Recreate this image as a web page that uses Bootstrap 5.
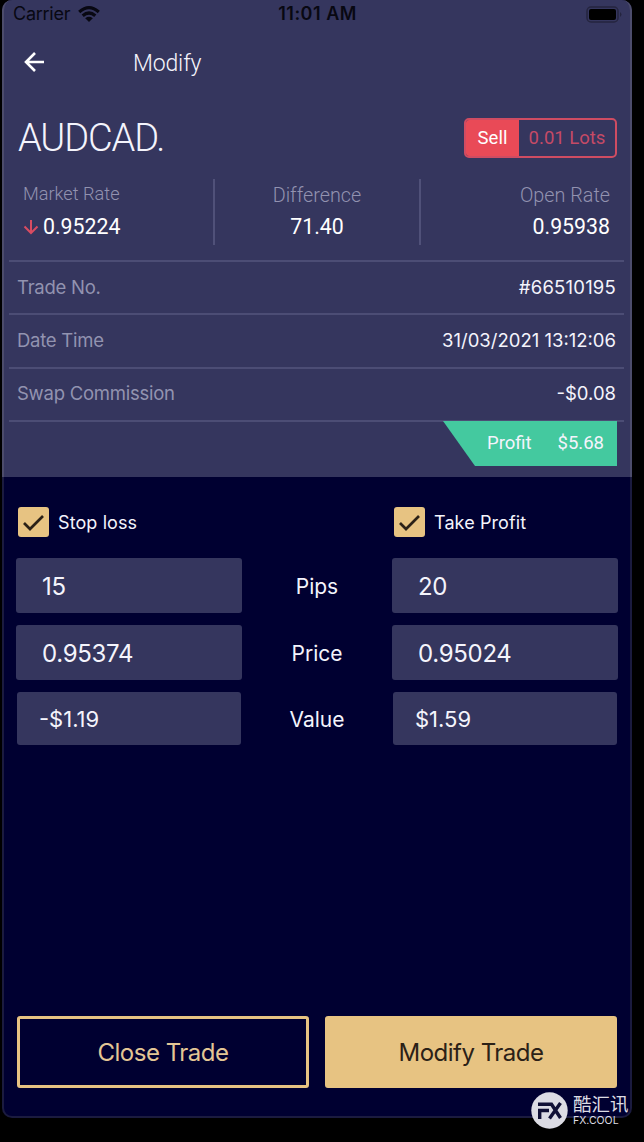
<!DOCTYPE html>
<html lang="en">
<head>
<meta charset="utf-8">
<meta name="viewport" content="width=device-width, initial-scale=1">
<title>Modify trade</title>
<link href="https://cdn.jsdelivr.net/npm/bootstrap@5.3.0/dist/css/bootstrap.min.css" rel="stylesheet">
<style>
  body { background: #000; color: #f4f4fc; font-family: Roboto, sans-serif; height: 1142px; overflow: hidden; line-height: 1; }
  .phone { width: 630px; height: 1118px; margin-left: 2px; background: #000031; border: 2px solid #1b1b3f; border-top: 0; border-radius: 10px; }
  .panel { height: 477px; background: #35365e; margin: 0 -2px; border: 2px solid #4c4c6b; border-width: 0 2px; border-radius: 10px 10px 0 0; }
  .inter { font-family: Inter, sans-serif; }
  .status { height: 28px; padding: 0 8px 0 9px; color: #080812; font-size: 18px; }
  .status > div { flex: 1 1 0; }
  .carrier { letter-spacing: -.25px; }
  .clock { letter-spacing: .5px; font-weight: 600; }
  .bar { height: 72px; padding: 0 20px 4px; }
  .bar-title { font-size: 23px; font-weight: 300; margin-left: 88px; padding-top: 2px; letter-spacing: -.15px; }
  .head { height: 76px; padding: 0 13px 0 14px; }
  .symbol { font-size: 38px; font-weight: 300; letter-spacing: -1.1px; }
  .lots { height: 40px; width: 153px; border: 2px solid #cf4c62; border-radius: 5px; font-size: 18.5px; overflow: hidden; }
  .lots-side { width: 53px; background: #e94a57; color: #fff; }
  .lots-size { color: #c54a66; }
  .stats { height: 84px; padding: 3px 20px 0 19px; }
  .stat-label { font-size: 19.8px; font-weight: 300; color: #9292b0; height: 31px; padding-top: 7px; }
  .stat-label.market { font-size: 18.2px; padding-top: 6px; }
  .stat-value { font-size: 21.3px; color: #fff; height: 34px; }
  .rule-v { width: 2px; height: 66px; background: #505179; }
  .info { margin: 0 6px 0 5px; font-size: 18.5px; }
  .info-row { height: 53.3px; border-top: 2px solid #4c4d75; padding: 0 8px 1px; }
  .info-row span:first-child { color: #9293b0; letter-spacing: -.25px; }
  .profit { width: 174px; height: 45px; margin-right: 13px; background: #44c99f; clip-path: polygon(0 0,100% 0,100% 100%,32px 100%); padding: 0 13px 0 44px; font-size: 18.5px; }
  .profit-line { margin: 0 6px -1px 5px; border-top: 2px solid #4c4d75; }
  .levels { display: grid; grid-template-columns: 226px 150px 226px; padding: 30px 0 0 12px; row-gap: 12px; }
  .tick { width: 31px; height: 30px; border-radius: 3px; background: #e7c382; margin-left: 2px; }
  .tick-label { font-size: 18px; letter-spacing: .1px; margin-left: 9px; padding-top: 7px; }
  .field { height: 55px; background: #35365e; border-radius: 3px; padding: 2px 0 0 26px; font-size: 24px; letter-spacing: -.3px; }
  .field-value { height: 53px; margin: 0 1px; padding: 0 0 0 22px; font-size: 22px; letter-spacing: 0; }
  .mid { font-size: 21px; padding-top: 2px; }
  .checks { height: 39px; }
  .action { height: 72px; border-radius: 3px; border: 3px solid #e7c382; font-size: 24px; letter-spacing: -.5px; padding: 2px 0 0; }
  .action-outline, .action-outline:hover { color: #e3c695; }
  .action-fill, .action-fill:hover { background: #e7c382; color: #2b2117; border-color: #e7c382; }
  .actions { margin: 271px 13px 0; gap: 16px; }
  .brand { position: absolute; left: 531px; top: 1092px; width: 110px; color: #dcdce4; }
  .brand-cjk { font-family: "Liberation Sans", "Noto Sans CJK SC", sans-serif; font-size: 18.5px; line-height: 20px; height: 20px; margin-top: 3px; white-space: nowrap; }
  .brand-url { font-family: Inter, sans-serif; font-size: 10.5px; line-height: 11px; white-space: nowrap; }
</style>
<script src="https://cdn.jsdelivr.net/npm/bootstrap@5.3.0/dist/js/bootstrap.bundle.min.js"></script>
</head>
<body>
<main class="phone">
  <section class="panel">
    <div class="status inter d-flex align-items-center">
      <div class="d-flex align-items-center"><span class="carrier">Carrier</span>
        <svg class="ms-2" width="22" height="16" viewBox="0 0 22 16" fill="none" stroke="#080812" stroke-width="3.2"><path d="M1.2 6Q11-2.6 20.8 6M4.7 9.8Q11 4.2 17.3 9.8"/><path d="M11 16 7.2 12.2Q11 9.3 14.8 12.2Z" fill="#080812" stroke="none"/></svg>
      </div>
      <div class="clock text-center">11:01 AM</div>
      <div class="text-end"><svg width="36" height="17" viewBox="0 0 36 17"><rect x="1" y="1" width="31" height="15" rx="4" fill="none" stroke="#25253f" stroke-width="1.5"/><rect x="3" y="3" width="27" height="11" rx="2" fill="#000"/><path d="M34 6v5q3-2.5 0-5" fill="#25253f"/></svg></div>
    </div>
    <header class="bar d-flex align-items-center">
      <svg width="21" height="22" viewBox="0 0 21 22" fill="none" stroke="#fff" stroke-width="2.6"><path d="M20 11H3M11 2 2 11 11 20"/></svg>
      <span class="bar-title">Modify</span>
    </header>
    <div class="head d-flex align-items-center justify-content-between">
      <span class="symbol">AUDCAD.</span>
      <div class="lots d-flex"><span class="lots-side d-flex align-items-center justify-content-center">Sell</span><span class="lots-size flex-fill d-flex align-items-center justify-content-center">0.01 Lots</span></div>
    </div>
    <div class="stats d-flex">
      <div style="width:190px"><div class="stat-label market">Market Rate</div><div class="stat-value d-flex align-items-center"><svg width="16" height="15" viewBox="0 0 16 15" fill="none" stroke="#d94c62" stroke-width="2"><path d="M8 0V13M1.5 6.500 8 13 14.500 6.500"/></svg><span class="ms-1">0.95224</span></div></div>
      <div class="rule-v"></div>
      <div class="text-center" style="width:204px"><div class="stat-label">Difference</div><div class="stat-value d-flex align-items-center justify-content-center">71.40</div></div>
      <div class="rule-v"></div>
      <div class="text-end flex-fill"><div class="stat-label">Open Rate</div><div class="stat-value d-flex align-items-center justify-content-end">0.95938</div></div>
    </div>
    <div class="info inter">
      <div class="info-row d-flex align-items-center justify-content-between"><span>Trade No.</span><span style="letter-spacing:.2px">#66510195</span></div>
      <div class="info-row d-flex align-items-center justify-content-between"><span>Date Time</span><span>31/03/2021 13:12:06</span></div>
      <div class="info-row d-flex align-items-center justify-content-between"><span>Swap Commission</span><span>-$0.08</span></div>
    </div>
    <div class="profit-line"></div>
    <div class="profit ms-auto d-flex align-items-center justify-content-between"><span>Profit</span><span>$5.68</span></div>
  </section>
  <section class="levels inter">
    <div class="checks d-flex align-items-start"><div class="tick d-flex align-items-center justify-content-center"><svg width="21" height="17" viewBox="0 0 21 17" fill="none" stroke="#2b2117" stroke-width="2.7"><path d="M1 9 7 15 20 2"/></svg></div><span class="tick-label">Stop loss</span></div>
    <div></div>
    <div class="checks d-flex align-items-start"><div class="tick d-flex align-items-center justify-content-center"><svg width="21" height="17" viewBox="0 0 21 17" fill="none" stroke="#2b2117" stroke-width="2.7"><path d="M1 9 7 15 20 2"/></svg></div><span class="tick-label">Take Profit</span></div>
    <div class="field d-flex align-items-center">15</div><div class="mid d-flex align-items-center justify-content-center">Pips</div><div class="field d-flex align-items-center">20</div>
    <div class="field d-flex align-items-center">0.95374</div><div class="mid d-flex align-items-center justify-content-center">Price</div><div class="field d-flex align-items-center">0.95024</div>
    <div class="field field-value d-flex align-items-center">-$1.19</div><div class="mid d-flex align-items-center justify-content-center">Value</div><div class="field field-value d-flex align-items-center">$1.59</div>
  </section>
  <div class="actions inter d-flex">
    <button class="btn action action-outline flex-fill w-50">Close Trade</button>
    <button class="btn action action-fill flex-fill w-50">Modify Trade</button>
  </div>
</main>
<div class="brand d-flex align-items-start">
  <svg width="37" height="37" viewBox="0 0 37 37"><circle cx="18.5" cy="18.5" r="18.2" fill="#dcdce4"/><g fill="none" stroke="#111136" stroke-width="3.4"><path d="M7 12.3H20.5L29.5 26M8.700 27V18.500H18M29.500 11 18.500 26.500"/></g></svg>
  <div style="margin-left:5px"><div class="brand-cjk">酷汇讯</div><div class="brand-url">FX.COOL</div></div>
</div>
</body>
</html>
